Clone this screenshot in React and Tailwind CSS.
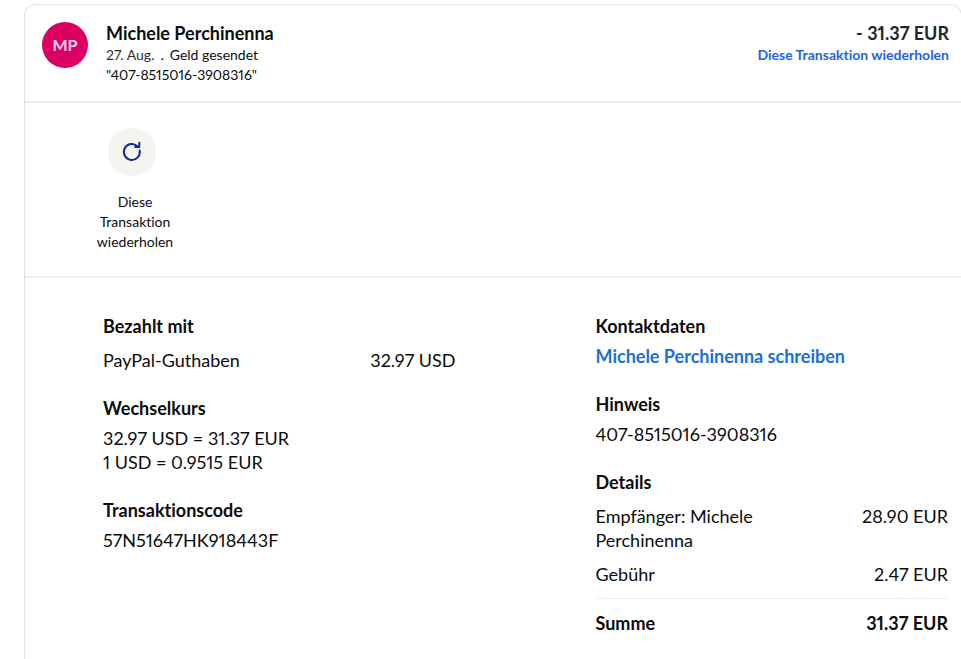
const EXCHANGE_LINES = ["32.97 USD = 31.37 EUR", "1 USD = 0.9515 EUR"];

const FEES = [
  { label: "Empfänger: Michele Perchinenna", amount: "28.90 EUR" },
  { label: "Gebühr", amount: "2.47 EUR" },
];

function RepeatIcon() {
  return (
    <svg viewBox="0 0 24 24" className="w-6 h-6" fill="none" stroke="#142c8e" strokeWidth="2" aria-hidden="true">
      <path d="M19.7 10.4A8 8 0 1 1 17.4 6.2" strokeLinecap="round" />
      <path d="M19.3 2.8V6.9H15.2" strokeLinecap="round" strokeLinejoin="round" />
    </svg>
  );
}

function Section({ title, children }) {
  return (
    <section>
      <h2 className="font-bold mb-1.5">{title}</h2>
      {children}
    </section>
  );
}

function AmountRow({ label, amount }) {
  return (
    <div className="flex justify-between gap-4">
      <dt className="max-w-[200px]">{label}</dt>
      <dd className="whitespace-nowrap">{amount}</dd>
    </div>
  );
}

function TransactionHeader() {
  return (
    <header className="flex items-start pt-4 pb-4 pl-[17px] pr-3 border-b-2 border-[#ececec]">
      <div className="w-[46px] h-[46px] mt-px mr-[18px] shrink-0 rounded-full bg-[#dc0063] text-[#ffd3ea] text-base font-bold flex items-center justify-center">
        MP
      </div>
      <div className="flex-1 text-sm leading-5">
        <h1 className="text-lg leading-6 font-bold">Michele Perchinenna</h1>
        <p className="flex gap-1.5">
          <span className="text-[#2c2e2f]">27. Aug.</span>
          <span>.</span>
          <span>Geld gesendet</span>
        </p>
        <p>"407-8515016-3908316"</p>
      </div>
      <div className="text-right text-sm leading-5">
        <p className="text-lg leading-6 font-bold text-[#242627]">- 31.37 EUR</p>
        <a href="#repeat" className="font-bold text-[#2563df]">Diese Transaktion wiederholen</a>
      </div>
    </header>
  );
}

export default function App() {
  return (
    <div className="min-h-screen flex overflow-hidden bg-white pt-1 pl-6 font-['Lato',sans-serif] proportional-nums [font-variant-ligatures:none] text-lg leading-6 text-[#0c0c0d]">
      <article className="flex-1 -mr-px border border-b-0 border-[#dfe1e3] rounded-t-xl">
        <TransactionHeader />

        <div className="pt-[25px] pb-6 pl-[71px] border-b-2 border-[#ececec]">
          <button type="button" className="block w-[78px] text-sm leading-5">
            <span className="w-12 h-12 ml-3 mb-4 rounded-full bg-[#f5f4ee] flex items-center justify-center">
              <RepeatIcon />
            </span>
            Diese Transaktion wiederholen
          </button>
        </div>

        <div className="grid grid-cols-2 gap-[140px] pt-9 pb-6 pl-[78px] pr-[13px]">
          <div className="flex flex-col gap-6">
            <Section title="Bezahlt mit">
              <dl className="pt-1">
                <AmountRow label="PayPal-Guthaben" amount="32.97 USD" />
              </dl>
            </Section>
            <Section title="Wechselkurs">
              {EXCHANGE_LINES.map((line) => (
                <p key={line}>{line}</p>
              ))}
            </Section>
            <Section title="Transaktionscode">
              <p>57N51647HK918443F</p>
            </Section>
          </div>

          <div className="flex flex-col gap-6">
            <Section title="Kontaktdaten">
              <a href="#contact" className="font-bold text-[#1b6fd8]">Michele Perchinenna schreiben</a>
            </Section>
            <Section title="Hinweis">
              <p>407-8515016-3908316</p>
            </Section>
            <Section title="Details">
              <dl className="pt-1">
                <div className="flex flex-col gap-2.5 pb-3">
                  {FEES.map((fee) => (
                    <AmountRow key={fee.label} label={fee.label} amount={fee.amount} />
                  ))}
                </div>
                <div className="pt-3 border-t border-[#ebecee] font-bold">
                  <AmountRow label="Summe" amount="31.37 EUR" />
                </div>
              </dl>
            </Section>
          </div>
        </div>
      </article>
    </div>
  );
}
